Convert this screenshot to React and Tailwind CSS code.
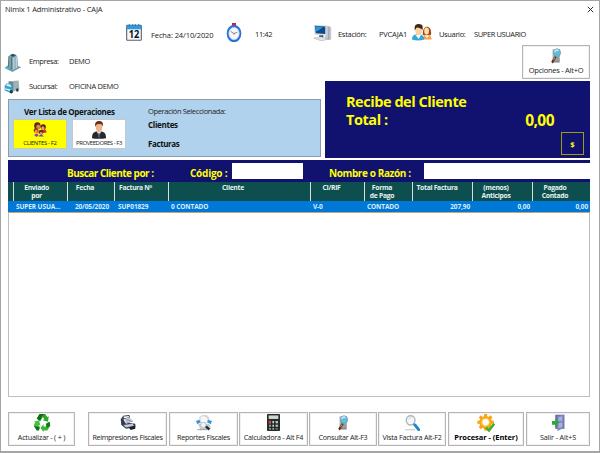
import React from "react";

const Icon = ({ className, children }) => (
  <svg viewBox="0 0 24 24" className={className} preserveAspectRatio="none">{children}</svg>
);

const Calendar = () => (
  <Icon className="w-4 h-[17px] shrink-0">
    <rect x="1" y="2" width="22" height="21" rx="1" fill="#f4f8fc" stroke="#556070" strokeWidth="1.6" />
    <rect x="1" y="1.5" width="22" height="6" fill="#2c9be0" />
    <path d="M5 0v3M10 0v3M14 0v3M19 0v3" stroke="#385068" strokeWidth="1" />
    <text x="12" y="19.6" textAnchor="middle" fontSize="14" fontWeight="700" fontFamily="Open Sans, sans-serif" fill="#111">12</text>
  </Icon>
);

const Clock = () => (
  <Icon className="w-4 h-[19px] shrink-0">
    <rect x="9" y="0" width="6" height="4" fill="#dc1d1d" />
    <circle cx="12" cy="13.3" r="9.5" fill="#f6f8fc" stroke="#2b72d4" strokeWidth="3" />
    <circle cx="12" cy="13.3" r="7.6" fill="none" stroke="#b4cdf0" strokeWidth="1" />
    <path d="M7 10.5l5 3 5-2" fill="none" stroke="#777" strokeWidth="1.2" />
    <circle cx="12" cy="13.5" r="1.1" fill="#c66" />
  </Icon>
);

const Computer = () => (
  <Icon className="w-[19px] h-[17px] shrink-0">
    <path d="M15 2l6 1 2 2v17l-4 1-4-2z" fill="#c3c8cd" />
    <path d="M20 4v18" stroke="#858d95" strokeWidth="1" />
    <path d="M1 1l16 1v14L2 15z" fill="#d8dde2" />
    <path d="M2.500 2.500l13 1v10.500L3.500 13z" fill="#0b4b8c" />
    <path d="M3 3l10 1-7 6-3 .5z" fill="#2e96d8" />
    <path d="M8 16h5v3H8z" fill="#303438" />
    <path d="M1 20l9-2 9 3-8 3z" fill="#dfe3e6" stroke="#9aa" strokeWidth=".7" />
  </Icon>
);

const Users = () => (
  <Icon className="w-[20px] h-[17px] shrink-0">
    <path d="M13 22c0-5 2-7 5-7s5.500 2 5.500 7z" fill="#f5a146" />
    <path d="M13 15c-1-14 10-15 10-2l-.5 3h-9z" fill="#9b4a12" />
    <ellipse cx="17.500" cy="10" rx="2.900" ry="5" fill="#fddcae" />
    <path d="M15 16l3 4 3-4z" fill="#fff0df" />
    <path d="M0 22c0-6 3-7.500 7-7.500s7.500 1.500 7.500 7.500q-7 2.500-14.500 0z" fill="#35a6dc" />
    <path d="M4 15l4 6 3-6z" fill="#f2fbff" />
    <ellipse cx="8" cy="9.500" rx="4" ry="6" fill="#fcd3a0" />
    <path d="M3.500 9C2 1 6 0 8 0c5 0 5.500 4 4.500 9-1-4-6-3-7-4z" fill="#3f2617" />
  </Icon>
);

const Building = () => (
  <Icon className="w-[18px] h-[19px] shrink-0">
    <path d="M1 18l10-4 12 4-12 6z" fill="#6d98a4" />
    <path d="M6 4l4-3 6 1 2 3 1 13-7 4-7-4z" fill="#8eb3bc" />
    <path d="M6 4l5 1v16l-6-3z" fill="#527884" />
    <path d="M8 5v14M13 6v14M16.500 5v14" stroke="#d7eaec" strokeWidth=".9" />
    <path d="M8 3l4-2 4 2-4 2z" fill="#2d4e58" />
    <path d="M1 19l4-2 4 3-2 2z" fill="#4db0c5" />
  </Icon>
);

const Truck = () => (
  <Icon className="w-4 h-[14px] shrink-0">
    <path d="M7 2l15-1 1 15-10 4-6-6z" fill="#a0b2b8" />
    <path d="M7 2l7 2v14l-7-4z" fill="#6d858e" />
    <path d="M1 10l3-4 7 1 2 4v10l-4 1-8-4z" fill="#35a4ca" />
    <path d="M3 10l2-3 5 1 1 4z" fill="#d6f0f6" />
    <path d="M1 14l8 2v3l-8-3z" fill="#e8f1f3" />
    <ellipse cx="11" cy="20" rx="2.500" ry="3" fill="#263a44" />
    <ellipse cx="20" cy="17" rx="2" ry="3" fill="#263a44" />
  </Icon>
);

const Search = ({ className }) => (
  <Icon className={className}>
    <path d="M5 2h15v20H5z" fill="#b3b7ba" />
    <path d="M7 15h11M7 18h12M7 20.500h11" stroke="#676f75" strokeWidth="1.300" />
    <path d="M12 12L4 22" stroke="#53301d" strokeWidth="4" />
    <path d="M10 14l-3 4" stroke="#d58a32" strokeWidth="2" />
    <ellipse cx="14" cy="7" rx="7" ry="5.800" fill="#60bddb" stroke="#6c9dad" strokeWidth="1.500" />
    <path d="M9 6q4-5 8-2" stroke="#dff7ff" strokeWidth="2" fill="none" />
  </Icon>
);

const Family = () => (
  <Icon className="mb-[2px] w-[14px] h-[15px]">
    <path d="M15 12h6q3 2 2 5h-8z" fill="#d93325" />
    <circle cx="7.500" cy="6" r="5.500" fill="#5a2b13" />
    <ellipse cx="9" cy="8" rx="3.500" ry="4" fill="#dd8548" />
    <circle cx="17.500" cy="8" r="4.500" fill="#5d1e12" />
    <ellipse cx="17" cy="10" rx="2.800" ry="3.300" fill="#e99a62" />
    <path d="M6 13h9v5H6z" fill="#e58a27" />
    <circle cx="5" cy="13.500" r="3.800" fill="#823e13" />
    <ellipse cx="5.500" cy="15" rx="2.400" ry="2.500" fill="#e89b60" />
    <circle cx="14" cy="16.500" r="3.800" fill="#54290f" />
    <ellipse cx="14" cy="18" rx="2.500" ry="2.200" fill="#e59a65" />
    <path d="M2 21q4-5 8 0l-4 3z" fill="#a43cb0" />
    <path d="M9 23q5-5 10 0z" fill="#4c56c8" />
  </Icon>
);

const Businessman = () => (
  <Icon className="w-[14px] h-[18px]">
    <path d="M0 23c0-6 2-8 8-9h8c6 1 8 3 8 9-7 1-18 1-24 0z" fill="#25282d" />
    <path d="M8 13l4 8 4-8z" fill="#eef1f4" />
    <path d="M11 16h2l1 5-2 2-2-2z" fill="#4a5666" />
    <ellipse cx="12" cy="8" rx="5.500" ry="7" fill="#edb58b" />
    <path d="M5.500 8C4 1 9 0 12 0c5 0 8 2 6.500 8-1-4-3-4-6-4s-5 0-7 4z" fill="#6b3219" />
  </Icon>
);

const Recycle = () => (
  <Icon className="w-[18px] h-[19px]">
    <path d="M5 7l4-6h7l3 4 2-1-1 7-7-2 2-1-2-3-3 5z" fill="#2da62a" />
    <path d="M9 1h7l-4 3-3 6-4-3z" fill="#116d18" />
    <path d="M22 11l1 5-4 6h-5v2l-4-5 4-5v3h3l1-4z" fill="#37b931" />
    <path d="M22 11l1 5-4 3-2-5z" fill="#167a1d" />
    <path d="M8 21H5l-4-6 2-3-2-1 7-2 2 7-2-1-1 2 2 1z" fill="#45c43a" />
    <path d="M8 22H5l-4-6 4 1h4z" fill="#126d18" />
  </Icon>
);

const Register = () => (
  <Icon className="w-4 h-[15px]">
    <path d="M2 5L5 1l9-1 1 4-10 3z" fill="#293245" />
    <path d="M5 2.500l8-1 1 2-8 2z" fill="#eef0f4" />
    <path d="M1 6l4-1 3 7 15 2v5l-14 3-7-6z" fill="#313b50" />
    <path d="M5 7l10-3 6 6-12 4z" fill="#dfe3ea" />
    <path d="M8 8l7-2M9 10l8-2M10 12l9-2" stroke="#68728a" strokeWidth="1" />
    <path d="M5 16l14-2 2 3-12 3z" fill="#c2c9d4" />
    <path d="M13 20l10-3v5l-7 2z" fill="#182132" />
  </Icon>
);

const Reports = () => (
  <Icon className="w-4 h-4">
    <path d="M5 3l5-3h6l4 4v8H5z" fill="#d3d7da" />
    <path d="M7 3l5-1 5 3v6H7z" fill="#f7f8f9" />
    <path d="M0 9l5-2 2 4-5 3zM24 9l-6-2-1 4 5 3z" fill="#3f93d0" />
    <path d="M3 13h17l3 8-16 2z" fill="#c5cbd0" />
    <circle cx="11" cy="15" r="4" fill="#eef5fb" stroke="#a7b1ba" />
    <path d="M15 17l5 5" stroke="#202b38" strokeWidth="3.500" />
    <path d="M2 22h15" stroke="#98a1a8" strokeWidth="1.500" />
  </Icon>
);

const Calculator = () => (
  <Icon className="w-[13px] h-[17px]">
    <rect x="0" y="0" width="24" height="24" rx="1.500" fill="#282b2b" />
    <rect x="3" y="2" width="18" height="5" fill="#cdd8cf" />
    <path d="M4 10h3v3H4zM10 10h3v3h-3zM16 10h4v3h-4zM10 15h3v3h-3zM16 15h4v3h-4zM4 20h3v2H4zM10 20h3v2h-3z" fill="#d0d2d2" />
    <path d="M3 9.500h4v4H3z" fill="#d83838" />
    <path d="M16 20h4v2h-4z" fill="#41a447" />
    <path d="M4 15h3v3H4z" fill="#b7baba" />
  </Icon>
);

const Magnifier = () => (
  <Icon className="w-[15px] h-[16px]">
    <path d="M0 22h16" stroke="#d3d3d3" strokeWidth="2" />
    <circle cx="9" cy="8" r="7" fill="#f3f7fa" stroke="#b4b7ba" strokeWidth="2.300" />
    <path d="M5 7q2-4 6-3" fill="none" stroke="#cfdde8" strokeWidth="1.500" />
    <path d="M13.500 13l3 3" stroke="#8b9298" strokeWidth="2.500" />
    <path d="M16 15l6 7" stroke="#1b86cf" strokeWidth="4.500" strokeLinecap="round" />
  </Icon>
);

const Gear = () => (
  <Icon className="w-[18px] h-[18px]">
    <g fill="#f7a312">
      <circle cx="11.500" cy="11" r="8.500" />
      <path d="M9.500 0h4v22h-4zM.5 9h22v4H.5z" />
      <path d="M9.500 0h4v22h-4zM.5 9h22v4H.5z" transform="rotate(45 11.500 11)" />
    </g>
    <circle cx="11.500" cy="11" r="6.500" fill="#fcbf36" />
    <circle cx="11.500" cy="11" r="4.200" fill="#fff" />
    <path d="M12 18l4 4 7-9" fill="none" stroke="#3fae2c" strokeWidth="3.300" />
  </Icon>
);

const Door = () => (
  <Icon className="w-[13px] h-[17px]">
    <path d="M6 1h17v20H6z" fill="#6b7099" />
    <path d="M10 3l11-2v19l-11 4z" fill="#8289c4" />
    <path d="M12 5l7-2v6l-7 1zM12 13l7-1v6l-7 2z" fill="#a8afdf" />
    <path d="M0 10h6V6l7 6-7 7v-4H0z" fill="#28ab3d" />
  </Icon>
);

const ActionButton = ({ icon, label, className = "", labelClass = "" }) => (
  <button className={`flex h-[34px] shrink-0 flex-col items-center justify-end border border-[#b5b5b5] bg-white pb-[3px] outline outline-1 -outline-offset-2 outline-[#f0f0f0] ${className}`}>
    <span className="flex h-[19px] items-center justify-center">{icon}</span>
    <span className={`whitespace-nowrap leading-[10px] ${labelClass}`}>{label}</span>
  </button>
);

const columns = [
  { h: ["Enviado", "por"], v: "SUPER USUA...", c: "w-[54px]", a: "pl-[2px] text-left" },
  { h: ["Fecha"], v: "20/05/2020", c: "w-[47px]", a: "text-right pr-[6px]", hc: "pr-3" },
  { h: ["Factura Nº"], v: "SUP01829", c: "w-[54px]", a: "pl-[3px] text-left", hc: "pr-3" },
  { h: ["Cliente"], v: "0 CONTADO", c: "w-[142px]", a: "pl-[2px] text-left", hc: "pr-[13px]" },
  { h: ["CI/RIF"], v: "V-0", c: "w-[54px]", a: "pl-[2px] text-left", hc: "pr-3" },
  { h: ["Forma", "de Pago"], v: "CONTADO", c: "w-[48px]", a: "pl-[2px] text-left", hc: "pr-[13px]" },
  { h: ["Total Factura"], v: "207,90", c: "w-[60px]", a: "pr-[3px] text-right", hc: "pr-[11px]" },
  { h: ["(menos)", "Anticipos"], v: "0,00", c: "w-[60px]", a: "pr-[3px] text-right", hc: "pr-[13px]" },
  { h: ["Pagado", "Contado"], v: "0,00", c: "w-[57px]", a: "pr-[2px] text-right", hc: "pr-[13px]" },
];

export default function App() {
  return (
    <div className="flex h-[453px] w-[600px] flex-col overflow-hidden border border-b-2 border-[#a5a5a5] bg-white font-['Open_Sans','Noto_Sans',sans-serif] text-[7.5px] leading-[10px] text-[#222]">
      <header className="flex h-[19px] shrink-0 items-start justify-between pl-[4px] pr-[5px] pt-[3px]">
        <span className="whitespace-nowrap tracking-[-0.16px]">Nimix 1 Administrativo - CAJA</span>
        <svg viewBox="0 0 8 8" className="mt-[2px] h-[7px] w-[7px]"><path d="M1 1l6 6M7 1L1 7" stroke="#222" strokeWidth="1.100" /></svg>
      </header>

      <div className="flex h-[24px] shrink-0 items-center whitespace-nowrap pl-[125px]">
        <Calendar />
        <span className="ml-[9px] mt-[5px] w-[65px] tracking-[-0.1px]">Fecha: 24/10/2020</span>
        <div className="ml-[10px] flex items-center"><Clock /></div>
        <span className="ml-[13px] mt-[3px] w-[17px] tracking-[-0.4px]">11:42</span>
        <div className="ml-[41px] flex"><Computer /></div>
        <span className="ml-[6px] mt-[3px] w-[29px] tracking-[-0.3px]">Estación:</span>
        <span className="ml-[12px] mt-[3px] w-[30px] tracking-[-0.2px]">PVCAJA1</span>
        <div className="ml-[3px] flex"><Users /></div>
        <span className="ml-[7px] mt-[3px] w-[26px] tracking-[-0.35px]">Usuario:</span>
        <span className="ml-[9px] mt-[3px] tracking-[-0.4px]">SUPER USUARIO</span>
      </div>

      <div className="flex h-[115px] shrink-0 pl-[7px] pr-[9px]">
        <div className="flex w-[313px] shrink-0 flex-col">
          <div className="-ml-[4px] mt-[8px] flex h-[20px] items-center">
            <Building />
            <span className="ml-[7px] mt-[-2px] w-[40px] tracking-[-0.4px]">Empresa:</span>
            <span className="mt-[-2px] tracking-[-0.3px]">DEMO</span>
          </div>
          <div className="-ml-[4px] mt-[5px] flex h-[20px] items-center">
            <Truck />
            <span className="ml-[9px] mt-[-2px] w-[40px] tracking-[-0.35px]">Sucursal:</span>
            <span className="mt-[-2px] tracking-[-0.3px]">OFICINA DEMO</span>
          </div>
          <section className="mt-[2px] flex h-[58px] border border-[#8e9aa5] bg-[#b0d2ec]">
            <div className="w-[130px] pl-[4px] pt-[7px]">
              <div className="whitespace-nowrap pl-[11px] text-[8px] font-bold tracking-[-0.35px] text-[#111]">Ver Lista de Operaciones</div>
              <div className="mt-[2px] flex gap-[5px]">
                <button className="flex h-[30px] w-[54px] flex-col items-center justify-end border border-[#c9cba8] bg-[#ffff00]">
                  <Family />
                  <span className="whitespace-nowrap text-[6px] leading-[9px] tracking-[-0.35px]">CLIENTES - F2</span>
                </button>
                <button className="flex h-[30px] w-[54px] flex-col items-center justify-end border border-[#c3c9ce] bg-white">
                  <Businessman />
                  <span className="whitespace-nowrap text-[6px] leading-[9px] tracking-[-0.45px]">PROVEEDORES - F3</span>
                </button>
              </div>
            </div>
            <div className="whitespace-nowrap pl-[9px] pt-[6px]">
              <div className="tracking-[-0.37px]">Operación Seleccionada:</div>
              <div className="mt-[4px] text-[8px] font-bold tracking-[-0.3px] text-[#111]">Clientes</div>
              <div className="mt-[9px] text-[8px] font-bold tracking-[-0.4px] text-[#111]">Facturas</div>
            </div>
          </section>
        </div>

        <div className="ml-[4px] flex w-[265px] shrink-0 flex-col">
          <div className="flex h-[37px] justify-end">
            <ActionButton className="mt-px h-[33px] w-[68px]" icon={<Search className="h-[16px] w-[12px]" />} label="Opciones - Alt+O" labelClass="tracking-[-0.25px]" />
          </div>
          <section className="flex h-[77px] justify-between bg-[#11116f] pl-[21px] pr-[6px] font-bold text-[#ffff00]">
            <div className="whitespace-nowrap pt-[12px] text-[14.5px] leading-[18px] tracking-[-0.45px]">
              <div>Recibe del Cliente</div>
              <div>Total :</div>
            </div>
            <div className="flex flex-col items-end">
              <div className="mr-[30px] mt-[30px] text-[15.5px] leading-[18px] tracking-[-0.55px]">0,00</div>
              <button className="mt-[3px] flex h-[23px] w-[23px] items-center justify-center border border-[#9c9c18] text-[7.5px]">$</button>
            </div>
          </section>
        </div>
      </div>

      <main className="ml-[7px] mr-[9px] mt-px flex h-[237px] shrink-0 flex-col">
        <div className="flex h-[22px] shrink-0 items-center whitespace-nowrap bg-[#11116f] text-[10px] font-bold text-[#ffff00]">
          <span className="ml-[59px] mt-[4px] w-[123px] tracking-[-0.52px]">Buscar Cliente por :</span>
          <span className="mt-[4px] w-[42px] tracking-[-0.25px]">Código :</span>
          <input aria-label="Código" className="h-[16px] w-[71px] bg-white" />
          <span className="ml-[26px] mt-[4px] w-[95px] tracking-[-0.4px]">Nombre o Razón :</span>
          <input aria-label="Nombre o Razón" className="h-[16px] min-w-0 flex-1 bg-white" />
        </div>
        <div className="flex h-[19px] shrink-0 bg-[#0d4e4e] text-[6.8px] font-bold leading-[8px] text-[#e8f2f2]">
          <div className="w-[6px] border-r border-[#d5dddd]" />
          {columns.map((c, i) => (
            <div key={i} className={`${c.c} ${c.hc || "pr-2"} shrink-0 whitespace-nowrap border-r border-[#d5dddd] pt-[2px] text-center tracking-[-0.3px] last:border-r-0`}>
              {c.h.map((line) => <div key={line}>{line}</div>)}
            </div>
          ))}
        </div>
        <div className="flex h-[12px] shrink-0 border-b border-[#bfa67c] bg-[#0078d7] text-[6.5px] font-bold leading-[12px] text-[#d9edfc]">
          <div className="w-[6px]" />
          {columns.map((c, i) => (
            <div key={i} className={`${c.c} ${c.a} shrink-0 whitespace-nowrap tracking-[-0.1px]`}>{c.v}</div>
          ))}
        </div>
        <div className="flex-1 border border-t-0 border-[#bdbdbd] bg-white" />
      </main>

      <footer className="mt-[15px] flex pl-[7px] text-[7.2px]">
        <ActionButton className="w-[67px]" icon={<Recycle />} label="Actualizar - ( + )" labelClass="tracking-[-0.2px]" />
        <ActionButton className="ml-[13px] w-[79px]" icon={<Register />} label="Reimpresiones Fiscales" labelClass="tracking-[-0.32px]" />
        <ActionButton className="ml-[2px] w-[69px]" icon={<Reports />} label="Reportes Fiscales" labelClass="tracking-[-0.28px]" />
        <ActionButton className="ml-[1px] w-[69px]" icon={<Calculator />} label="Calculadora - Alt F4" labelClass="tracking-[-0.25px]" />
        <ActionButton className="ml-[1px] w-[68px]" icon={<Search className="h-[16px] w-[12px]" />} label="Consultar Alt-F3" labelClass="tracking-[-0.28px]" />
        <ActionButton className="ml-[1px] w-[68px]" icon={<Magnifier />} label="Vista Factura Alt-F2" labelClass="tracking-[-0.24px]" />
        <ActionButton className="ml-[2px] w-[76px]" icon={<Gear />} label="Procesar - (Enter)" labelClass="text-[7.5px] font-bold tracking-[-0.05px] text-black" />
        <ActionButton className="ml-[2px] w-[64px]" icon={<Door />} label="Salir - Alt+S" labelClass="tracking-[-0.1px]" />
      </footer>
    </div>
  );
}
